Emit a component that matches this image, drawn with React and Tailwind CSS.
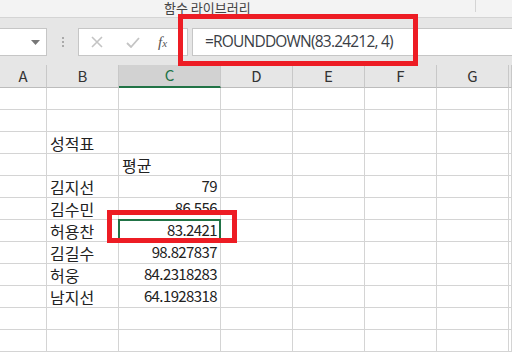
import React from 'react';

const cols = ['A', 'B', 'C', 'D', 'E', 'F', 'G', ''];

const rows = [
  ['', ''],
  ['', ''],
  ['성적표', ''],
  ['', '평균'],
  ['김지선', '79'],
  ['김수민', '86.556'],
  ['허용찬', '83.2421'],
  ['김길수', '98.827837'],
  ['허웅', '84.2318283'],
  ['남지선', '64.1928318'],
  ['', ''],
  ['', ''],
];

const KR = { fontFamily: '"Noto Sans CJK KR", "Noto Sans", sans-serif' };

function Cell({ children, className = '' }) {
  return (
    <div className={`h-[22px] border-r border-b border-[#d4d4d4] flex items-center overflow-visible whitespace-nowrap ${className}`}>
      {children}
    </div>
  );
}

export default function App() {
  return (
    <div className="relative w-[512px] h-[356px] overflow-hidden bg-white text-[#222]" style={KR}>
      {/* ribbon group label */}
      <div className="h-[18px] bg-[#f3f3f3] border-b border-[#d4d4d4] flex items-start">
        <div className="w-[164px]" />
        <span className="text-[13px] leading-[14px] pt-px text-[#444] w-[311px]">함수 라이브러리</span>
        <div className="w-px h-[12px] bg-[#d4d4d4]" />
      </div>

      {/* formula bar */}
      <div className="h-[47px] bg-[#e6e6e6] pt-[10px] flex items-start">
        <div className="w-[47px] h-[28px] bg-white border border-l-0 border-[#c6c6c6] flex items-center justify-end pr-[6px]">
          <svg width="9" height="5" viewBox="0 0 9 5"><path d="M0 0h9L4.5 5z" fill="#777" /></svg>
        </div>
        <div className="w-[31px] h-[28px] flex flex-col items-center justify-center gap-[2px]">
          <span className="w-[2px] h-[2px] bg-[#aaa]" />
          <span className="w-[2px] h-[2px] bg-[#aaa]" />
          <span className="w-[2px] h-[2px] bg-[#aaa]" />
        </div>
        <div className="w-[110px] h-[28px] bg-white border border-[#c6c6c6] flex items-center">
          <svg className="ml-[12px]" width="12" height="12" viewBox="0 0 12 12">
            <path d="M1 1l10 10M11 1L1 11" stroke="#c4c4c4" strokeWidth="1.6" />
          </svg>
          <svg className="ml-[23px]" width="14" height="11" viewBox="0 0 14 11">
            <path d="M1 6l4 4 8-9" stroke="#c4c4c4" strokeWidth="1.8" fill="none" />
          </svg>
          <span className="ml-[18px] text-[15px] italic text-[#555]" style={{ fontFamily: '"Liberation Serif", serif' }}>
            f<span className="text-[11px]">x</span>
          </span>
        </div>
        <div className="w-[4px]" />
        <div className="flex-1 h-[28px] bg-white border border-r-0 border-[#c6c6c6] flex items-center pl-[12px]">
          <span className="text-[15.5px] tracking-[-0.8px] text-[#3a3e46]" style={{ fontFamily: '"Open Sans", sans-serif' }}>
            =ROUNDDOWN(83.24212, 4)
          </span>
        </div>
      </div>

      {/* grid */}
      <div className="grid grid-cols-[47px_72px_102px_72px_72px_72px_72px_1fr]">
        {cols.map((c, i) => (
          <div
            key={c + i}
            className={`h-[23px] flex items-center justify-center text-[15px] text-[#333] border-r border-[#c8c8c8] ${
              c === 'C' ? 'bg-[#d2d2d2] border-b-2 border-b-[#217346] text-[#217346]' : 'bg-[#e6e6e6] border-b border-b-[#bcbcbc]'
            }`}
          >
            {c}
          </div>
        ))}
        {rows.map(([name, val], r) => (
          <React.Fragment key={r}>
            <Cell />
            <Cell className="pl-[3px] text-[16px]">{name}</Cell>
            <Cell
              className={`relative ${
                val === '평균' ? 'pl-[3px] text-[16px]' : 'justify-end pr-[3px] text-[15px] tracking-[-0.6px]'
              }`}
            >
              {val}
              {r === 6 && (
                <div className="absolute -left-px -top-px w-[103px] h-[23px] border-2 border-[#217346]">
                  <div className="absolute -right-[3px] -bottom-[3px] w-[5px] h-[5px] bg-[#217346] border border-white" />
                </div>
              )}
            </Cell>
            <Cell />
            <Cell />
            <Cell />
            <Cell />
            <Cell />
          </React.Fragment>
        ))}
      </div>

      {/* annotation boxes */}
      <div className="absolute left-[178px] top-[14px] w-[240px] h-[52px] border-[5px] border-[#ed1c24]" />
      <div className="absolute left-[107px] top-[210px] w-[130px] h-[33px] border-[5px] border-[#ed1c24]" />
    </div>
  );
}
